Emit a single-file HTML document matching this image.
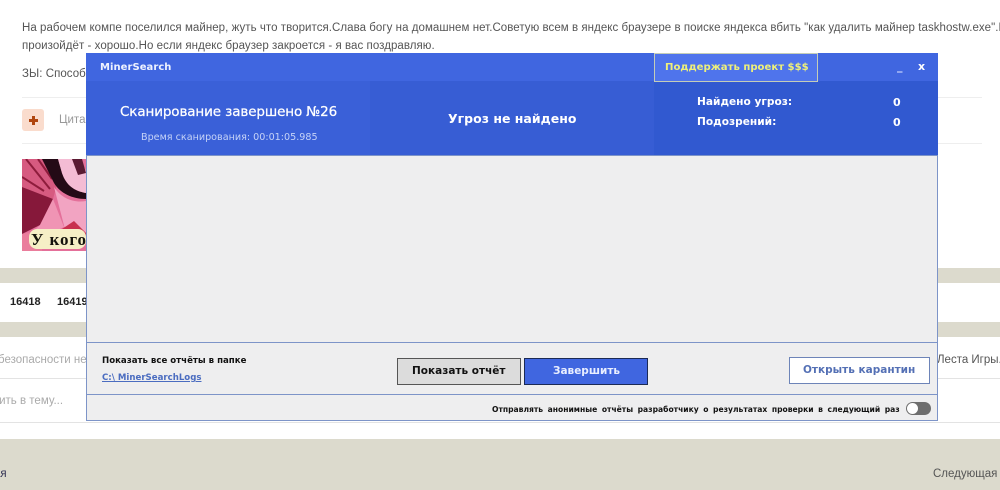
<!DOCTYPE html>
<html><head><meta charset="utf-8"><style>
html,body{margin:0;padding:0;overflow:hidden;width:1000px;height:490px}
body{position:relative;background:#fff;font-family:"Liberation Sans","Noto Sans CJK SC",sans-serif}
#r{left:0;top:0;width:1000px;height:490px;overflow:hidden;background:#fff;filter:blur(.3px)}
div,a,svg{position:absolute}
.t{white-space:nowrap}
.p{color:#555;font-size:11.5px;line-height:16px;letter-spacing:.05px}
.v{font-family:"DejaVu Sans",sans-serif;white-space:nowrap}
</style></head><body><div id="r">
<div class="t p" style="left:22px;top:20px">На рабочем компе поселился майнер, жуть что творится.Слава богу на домашнем нет.Советую всем в яндекс браузере в поиске яндекса вбить "как удалить майнер taskhostw.exe".Е</div>
<div class="t p" style="left:22px;top:38px">произойдёт - хорошо.Но если яндекс браузер закроется - я вас поздравляю.</div>
<div class="t p" style="left:22px;top:66px">ЗЫ: Способ</div>
<div style="left:22px;top:97px;width:960px;height:1px;background:#eee"></div>
<div style="left:22px;top:143px;width:960px;height:1px;background:#eee"></div>
<div style="left:22px;top:109px;width:22px;height:22px;border-radius:3px;background:#fadccd"></div>
<div style="left:29px;top:119px;width:9px;height:2.5px;background:#b0460f"></div>
<div style="left:32.3px;top:115.8px;width:2.5px;height:9px;background:#b0460f"></div>
<div class="t" style="left:59px;top:114px;font-size:11.5px;color:#999">Цита</div>
<svg style="left:22px;top:159px" width="64" height="92" viewBox="0 0 64 92">
<rect width="64" height="92" fill="#e4709a"/>
<path d="M0 0H30L36 22L31 40L0 28Z" fill="#d65a80"/>
<path d="M4 0L28 30M16 0L30 20M0 18L22 32" stroke="#8e1c3c" stroke-width="2" fill="none"/>
<path d="M0 28L31 40L18 66L0 75Z" fill="#86183a"/>
<path d="M31 40L42 68L30 74L12 72L18 66Z" fill="#f094b4"/>
<path d="M20 0H36L40 14C44 26 52 32 64 34V40C50 40 38 34 32 24Z" fill="#240a16"/>
<path d="M36 0H58L64 12V34C52 32 44 26 40 14Z" fill="#f4bcd4"/>
<path d="M50 0H60L64 14L56 16Z" fill="#5a1a32"/>
<path d="M32 28C40 40 52 44 64 42V74H44Z" fill="#f2a4c2"/>
<path d="M40 70L52 62L64 74V80H40Z" fill="#c8304e"/>
<path d="M0 75L20 70V92H0Z" fill="#ea7d9c"/>
<rect x="7" y="70" width="57" height="20" rx="8" fill="#f6efc6"/>
<text x="9" y="86" font-family="Liberation Serif,serif" font-weight="700" font-size="17" fill="#15130c" textLength="55" lengthAdjust="spacing">У кого</text>
</svg>
<div style="left:0;top:268px;width:1000px;height:15px;background:#dcdacd"></div>
<div style="left:0;top:322px;width:1000px;height:15px;background:#dcdacd"></div>
<div style="left:0;top:439px;width:1000px;height:51px;background:#dcdacd"></div>
<div style="left:0;top:378px;width:1000px;height:1px;background:#e3e3e3"></div>
<div style="left:0;top:422px;width:1000px;height:1px;background:#e3e3e3"></div>
<div class="t" style="left:10px;top:296px;font-size:11px;font-weight:700;color:#222">16418</div>
<div class="t" style="left:57px;top:296px;font-size:11px;font-weight:700;color:#222">16419</div>
<div class="t" style="left:-2px;top:354px;font-size:11.5px;color:#aaa">безопасности не</div>
<div class="t" style="left:-7px;top:395px;font-size:11.5px;color:#aaa">вить в тему...</div>
<div class="t" style="left:937px;top:354px;font-size:11.5px;color:#555">Леста Игры.</div>
<div class="t" style="left:-6px;top:468px;font-size:11.5px;color:#335">ая</div>
<div class="t" style="left:933px;top:468px;font-size:11.5px;color:#555">Следующая</div>

<div style="left:86px;top:53px;width:850px;height:366px;background:#eeeeef;border:1px solid #7d94c8"></div>
<div style="left:86px;top:53px;width:852px;height:28px;background:#4066e0"></div>
<div style="left:86px;top:81px;width:284px;height:74px;background:#3a60d8"></div>
<div style="left:370px;top:81px;width:284px;height:74px;background:#375dd4"></div>
<div style="left:654px;top:81px;width:284px;height:74px;background:#3159d0"></div>
<div style="left:86px;top:155px;width:852px;height:1px;background:#7d94c8"></div>
<div class="v" style="left:100px;top:62px;font-size:10px;font-weight:700;color:#eef2ff;letter-spacing:.05px">MinerSearch</div>
<div style="left:654px;top:53px;width:162px;height:27px;background:#4f74ec;border:1px solid #c4cdb8"></div>
<div class="v" style="left:665px;top:62px;font-size:10.1px;font-weight:700;color:#eef07a">Поддержать проект $$$</div>
<div class="v" style="left:897px;top:60px;font-size:11px;font-weight:700;color:#dfe6ff">_</div>
<div class="v" style="left:918px;top:60px;font-size:11px;font-weight:700;color:#fff">x</div>
<div class="v" style="left:120px;top:104px;font-size:13.5px;color:#fff;-webkit-text-stroke:.25px #fff;letter-spacing:-.12px">Сканирование завершено №26</div>
<div class="v" style="left:141px;top:132px;font-size:9.6px;color:#c6d3f7">Время сканирования: 00:01:05.985</div>
<div class="v" style="left:448px;top:111px;font-size:12.5px;font-weight:700;color:#fff">Угроз не найдено</div>
<div class="v" style="left:697px;top:96px;font-size:10.6px;font-weight:700;color:#fff">Найдено угроз:</div>
<div class="v" style="left:697px;top:116px;font-size:10.6px;font-weight:700;color:#fff">Подозрений:</div>
<div class="v" style="left:893px;top:96px;font-size:11px;font-weight:700;color:#fff">0</div>
<div class="v" style="left:893px;top:116px;font-size:11px;font-weight:700;color:#fff">0</div>
<div style="left:86px;top:342px;width:852px;height:1px;background:#7d94c8"></div>
<div style="left:86px;top:394px;width:852px;height:1px;background:#7d94c8"></div>
<div class="v" style="left:102px;top:356px;font-size:8.6px;font-weight:700;color:#111">Показать все отчёты в папке</div>
<a class="v" style="left:102px;top:373px;font-size:8.6px;font-weight:700;color:#4a6cc0;text-decoration:underline">C:\ MinerSearchLogs</a>
<div style="left:397px;top:358px;width:122px;height:25px;background:#dcdcdc;border:1px solid #555"></div>
<div class="v" style="left:412px;top:365px;font-size:10.5px;font-weight:700;color:#111">Показать отчёт</div>
<div style="left:524px;top:358px;width:122px;height:25px;background:#4066e0;border:1px solid #1b2a55"></div>
<div class="v" style="left:553px;top:365px;font-size:10.5px;font-weight:700;color:#e8eeff">Завершить</div>
<div style="left:789px;top:357px;width:139px;height:25px;background:#fff;border:1px solid #6d84b8"></div>
<div class="v" style="left:803px;top:364px;font-size:10.5px;font-weight:700;color:#5470b5">Открыть карантин</div>
<div class="v" style="left:492px;top:405px;font-size:7.6px;font-weight:700;color:#111;word-spacing:1.9px">Отправлять анонимные отчёты разработчику о результатах проверки в следующий раз</div>
<div style="left:906px;top:402px;width:25px;height:13px;border-radius:7px;background:#6e6e6e"></div>
<div style="left:907px;top:403px;width:11px;height:11px;border-radius:6px;background:#fff"></div>
</div></body></html>
